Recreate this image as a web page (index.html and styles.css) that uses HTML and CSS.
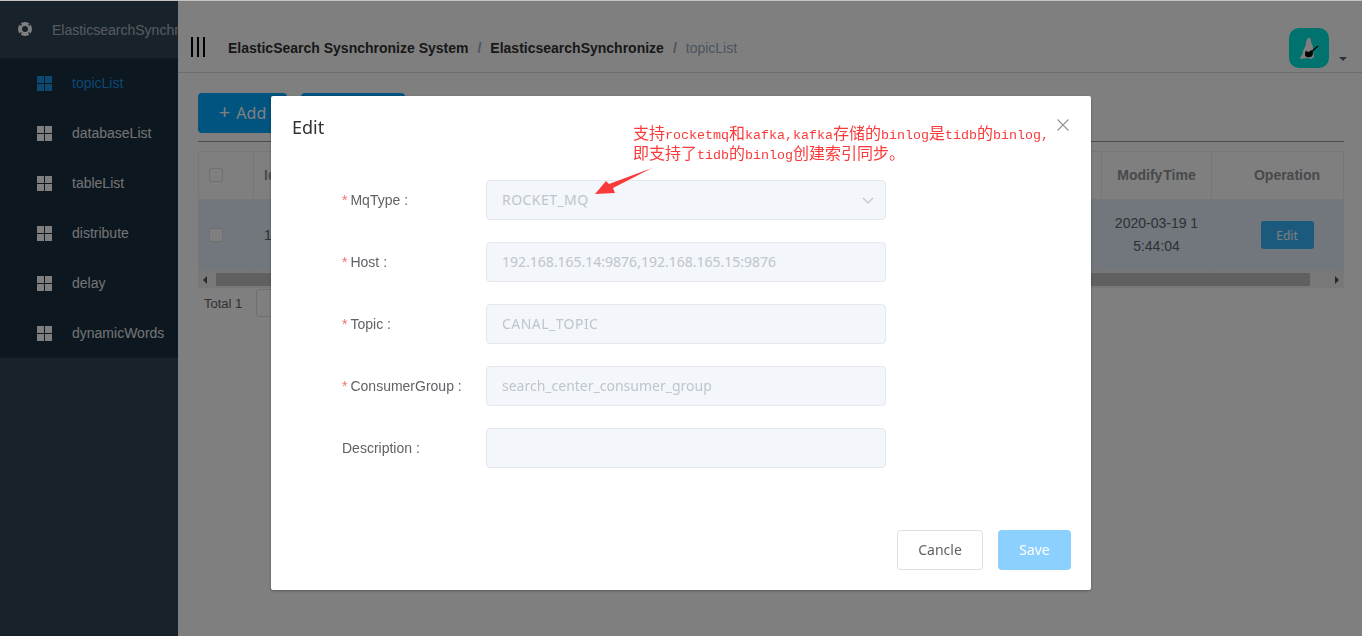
FILE: index.html
```html
<!DOCTYPE html>
<html lang="en">
<head>
  <meta charset="UTF-8">
  <title>ElasticSearch Sysnchronize System</title>
  <link rel="stylesheet" href="styles.css">
</head>
<body>
  <div class="app">
    <!-- Sidebar -->
    <aside class="sidebar">
      <div class="brand">
        <svg class="brand-icon" width="16" height="16" viewBox="0 0 16 16">
          <circle cx="8" cy="8" r="5" fill="none" stroke="#fff" stroke-width="4"/>
          <path d="M8 0v3M8 13v3M0 8h3M13 8h3" stroke="#2f4456" stroke-width="1.4" transform="rotate(45 8 8)"/>
        </svg>
        <span class="brand-name">ElasticsearchSynchronize</span>
      </div>
      <ul class="menu">
        <li class="menu-item active"><span class="grid-icon"><i></i><i></i><i></i><i></i></span>topicList</li>
        <li class="menu-item"><span class="grid-icon"><i></i><i></i><i></i><i></i></span>databaseList</li>
        <li class="menu-item"><span class="grid-icon"><i></i><i></i><i></i><i></i></span>tableList</li>
        <li class="menu-item"><span class="grid-icon"><i></i><i></i><i></i><i></i></span>distribute</li>
        <li class="menu-item"><span class="grid-icon"><i></i><i></i><i></i><i></i></span>delay</li>
        <li class="menu-item"><span class="grid-icon"><i></i><i></i><i></i><i></i></span>dynamicWords</li>
      </ul>
    </aside>

    <main class="main">
      <!-- Top bar -->
      <header class="topbar">
        <div class="hamburger"><i></i><i></i><i></i></div>
        <nav class="crumbs">
          <b>ElasticSearch Sysnchronize System</b><span class="sep">/</span><b>ElasticsearchSynchronize</b><span class="sep">/</span><span class="last">topicList</span>
        </nav>
        <div class="avatar">
          <svg width="40" height="40" viewBox="0 0 40 40">
            <path d="M19 10c2-1 3 1 3 4 1 2 2 4 2 7l1 8-3 2-4-1-6 1-1-1c1-2 3-4 3-7 1-3 3-5 3-8 0-2 1-4 2-5z" fill="#fff"/>
            <path d="M17 23l3 1 2-2 2 2c0 3-1 5-3 5-3 1-5-1-5-2 0-2 0-3 1-4z" fill="#000"/>
            <path d="M21 25l8-7" stroke="#000" stroke-width="1.3"/>
          </svg>
        </div>
        <span class="caret"></span>
      </header>

      <section class="content">
        <div class="toolbar">
          <button class="btn-primary btn-add"><span class="plus">+</span> Add</button>
          <button class="btn-primary btn-second">Delete</button>
        </div>
        <table class="grid">
          <colgroup><col class="c-check"><col><col class="c-time"><col class="c-op"></colgroup>
          <thead>
            <tr><th class="cell-check"><span class="check"></span></th><th class="left">Id</th><th class="head-time">Modify Time</th><th class="cell-op">Operation</th></tr>
          </thead>
          <tbody>
            <tr>
              <td class="cell-check"><span class="check"></span></td>
              <td class="left">1</td>
              <td class="time">2020-03-19 15:44:04</td>
              <td class="cell-op"><button class="btn-edit">Edit</button></td>
            </tr>
          </tbody>
        </table>
        <div class="hscroll">
          <span class="arrow arrow-l"></span>
          <span class="thumb"></span>
          <span class="arrow arrow-r"></span>
        </div>
        <div class="pager">
          <span>Total 1</span>
          <span class="page-size"></span>
        </div>
      </section>
    </main>
  </div>

  <!-- Edit dialog -->
  <div class="overlay">
    <div class="modal">
      <div class="modal-head">
        <span class="modal-title">Edit</span>
        <svg class="modal-close" width="12" height="12" viewBox="0 0 12 12"><path d="M.5.5l11 11M11.5.5l-11 11" stroke="#909399" stroke-width="1.1"/></svg>
      </div>
      <form class="form">
        <div class="row">
          <label class="label"><em>*</em>MqType :</label>
          <div class="field disabled caps">ROCKET_MQ
            <svg class="chevron" width="12" height="7" viewBox="0 0 12 7"><path d="M1 1l5 5 5-5" fill="none" stroke="#c0c4cc" stroke-width="1.1"/></svg>
          </div>
        </div>
        <div class="row">
          <label class="label"><em>*</em>Host :</label>
          <div class="field disabled">192.168.165.14:9876,192.168.165.15:9876</div>
        </div>
        <div class="row">
          <label class="label"><em>*</em>Topic :</label>
          <div class="field disabled caps">CANAL_TOPIC</div>
        </div>
        <div class="row">
          <label class="label"><em>*</em>ConsumerGroup :</label>
          <div class="field disabled">search_center_consumer_group</div>
        </div>
        <div class="row">
          <label class="label">Description :</label>
          <div class="field disabled"></div>
        </div>
      </form>
      <div class="modal-foot">
        <button class="btn-cancel">Cancle</button>
        <button class="btn-save">Save</button>
      </div>

      <!-- Annotation drawn over the dialog -->
      <div class="note">
        <div class="note-line">支持<span>rocketmq</span>和<span>kafka,kafka</span>存储的<span>binlog</span>是<span>tidb</span>的<span>binlog,</span></div>
        <div class="note-line">即支持了<span>tidb</span>的<span>binlog</span>创建索引同步。</div>
      </div>
      <svg class="note-arrow" width="58" height="28" viewBox="0 0 58 28">
        <path d="M0 27L11 14l3 3L57 1 18 21l2 5z" fill="#f83a3a"/>
      </svg>
    </div>
  </div>
</body>
</html>
```

FILE: styles.css
```css
* { box-sizing: border-box; }

body {
  margin: 0;
  height: 636px;
  overflow: hidden;
  background: #fff;
  font-family: "Liberation Sans", Arial, sans-serif;
  font-size: 14px;
  color: #606266;
}

button { font-family: "Noto Sans", sans-serif; font-size: 14px; }

.app {
  display: flex;
  height: 636px;
}

/* Sidebar */
.sidebar {
  width: 178px;
  flex: none;
  background: #2f4456;
  overflow: hidden;
}
.brand {
  display: flex;
  align-items: center;
  height: 58px;
  padding-left: 17px;
  white-space: nowrap;
}
.brand-icon { flex: none; }
.brand-name {
  flex: none;
  margin: 2px 0 0 19px;
  color: #fff;
  opacity: .6;
}
.menu {
  margin: 0;
  padding: 0;
  list-style: none;
  background: #182e40;
}
.menu-item {
  display: flex;
  align-items: center;
  height: 50px;
  padding-left: 37px;
  color: #e6e6e6;
}
.menu-item.active { color: #1890e0; }
.grid-icon {
  display: grid;
  grid-template-columns: 7px 7px;
  grid-template-rows: 7px 7px;
  gap: 1px;
  margin-right: 20px;
}
.grid-icon i { background: #fff; }
.active .grid-icon i { background: #1890e0; }

/* Top bar */
.main {
  flex: 1;
  min-width: 0;
}
.topbar {
  display: flex;
  align-items: center;
  height: 73px;
  padding: 23px 26px 0 13px;
  border-bottom: 1px solid #d8d8d8;
}
.hamburger {
  display: flex;
  gap: 4px;
  margin-right: 23px;
  margin-bottom: 2px;
}
.hamburger i {
  width: 2px;
  height: 20px;
  background: #000;
}
.crumbs {
  flex: 1;
}
.crumbs b { color: #303133; }
.crumbs .sep { margin: 0 9px; color: #97a8be; font-weight: bold; }
.crumbs .last { color: #97a8be; }
.avatar {
  width: 40px;
  height: 40px;
  border-radius: 10px;
  background: #00e6dc;
}
.avatar svg { display: block; }
.caret {
  width: 0;
  height: 0;
  margin: 22px -11px 0 10px;
  border: 4px solid transparent;
  border-top-color: #5a6270;
  border-bottom: 0;
}

/* Page content */
.content {
  padding: 20px 18px 0 20px;
}
.toolbar {
  display: flex;
  gap: 14px;
  padding-bottom: 8px;
  border-bottom: 1px solid #999;
  margin-bottom: 9px;
}
.btn-primary {
  height: 40px;
  border: 0;
  border-radius: 4px;
  background: #00a8ff;
  color: #fff;
}
.btn-add { width: 89px; font-size: 16px; }
.btn-second { width: 104px; }
.plus { font-size: 20px; line-height: 1; margin-right: 2px; }

.grid {
  width: 100%;
  table-layout: fixed;
  border-collapse: collapse;
  border: 1px solid #ebeef5;
}
.c-check { width: 55px; }
.c-time { width: 110px; }
.c-op { width: 132px; }
.grid th, .grid td {
  border: 1px solid #ebeef5;
  text-align: center;
  padding: 0 12px;
}
.grid th {
  height: 48px;
  padding-bottom: 2px;
  color: #909399;
}
.grid td {
  height: 71px;
  background: #e2eefb;
  line-height: 23px;
}
.grid .left { text-align: left; padding-left: 10px; }
.grid .cell-check { padding-left: 10px; }
.grid .cell-op { padding-left: 31px; }
.head-time { word-spacing: -3px; }
.time { word-break: break-all; }
.check {
  display: block;
  width: 14px;
  height: 14px;
  border: 1px solid #dcdfe6;
  border-radius: 2px;
  background: #fff;
}
.btn-edit {
  width: 53px;
  height: 28px;
  border: 0;
  border-radius: 3px;
  background: #36b4f8;
  color: #fff;
  font-size: 12px;
  vertical-align: middle;
}

.hscroll {
  display: flex;
  align-items: center;
  height: 17px;
  background: #f1f1f1;
}
.thumb {
  flex: 1;
  height: 13px;
  margin: 0 0 0 4px;
  background: #c1c1c1;
}
.arrow {
  width: 0;
  height: 0;
  border: 4px solid transparent;
}
.arrow-l { margin-left: 5px; margin-right: 5px; border-right-color: #505050; border-left: 0; }
.arrow-r { margin-left: 25px; margin-right: 5px; border-left-color: #505050; border-right: 0; }

.pager {
  display: flex;
  align-items: center;
  gap: 14px;
  padding: 1px 0 0 6px;
  font-size: 13px;
}
.page-size {
  width: 100px;
  height: 28px;
  border: 1px solid #dcdfe6;
  border-radius: 3px;
}

/* Dialog */
.overlay {
  position: fixed;
  inset: 0;
  display: flex;
  justify-content: center;
  align-items: flex-start;
  background: rgba(0, 0, 0, .5);
  border-top: 1px solid #c4c4c4;
}
.modal {
  position: relative;
  width: 820px;
  height: 494px;
  margin-top: 95px;
  background: #fff;
  border-radius: 2px;
  box-shadow: 0 1px 3px rgba(0, 0, 0, .3);
}
.modal-head {
  display: flex;
  justify-content: space-between;
  padding: 21px 22px 0 21px;
  height: 84px;
}
.modal-title {
  font-family: "Noto Sans", sans-serif;
  font-size: 18px;
  line-height: 20px;
  color: #303133;
}
.modal-close { margin-top: 2px; }
.form {
  display: flex;
  flex-direction: column;
  gap: 22px;
  padding-left: 71px;
}
.row {
  display: flex;
  align-items: center;
  height: 40px;
}
.label {
  width: 144px;
  color: #606266;
}
.label em {
  font-style: normal;
  color: #f56c6c;
  margin-right: 3px;
}
.field {
  position: relative;
  width: 400px;
  height: 40px;
  line-height: 38px;
  padding: 0 15px;
  border: 1px solid #e4e7ed;
  border-radius: 4px;
  font-family: "Noto Sans", sans-serif;
}
.field.disabled {
  background: #f3f6fa;
  color: #c0c4cc;
}
.field.caps { letter-spacing: .45px; }
.chevron {
  position: absolute;
  right: 11px;
  top: 16px;
}
.modal-foot {
  display: flex;
  justify-content: flex-end;
  gap: 15px;
  padding: 62px 20px 0 0;
}
.btn-cancel, .btn-save {
  height: 40px;
  padding-bottom: 3px;
  border-radius: 4px;
}
.btn-cancel {
  width: 86px;
  border: 1px solid #dcdfe6;
  background: #fff;
  color: #606266;
}
.btn-save {
  width: 73px;
  border: 0;
  background: #8cd0ff;
  color: #fff;
}

/* Red annotation */
.note {
  position: absolute;
  left: 362px;
  top: 26px;
  white-space: nowrap;
  font-family: "Noto Sans CJK SC", sans-serif;
  font-size: 16px;
  line-height: 20px;
  color: #f83a3a;
}
.note-line { height: 20px; }
.note span {
  font-family: "Liberation Mono", monospace;
  font-size: 13.33px;
}
.note-arrow {
  position: absolute;
  left: 324px;
  top: 71px;
}
```
